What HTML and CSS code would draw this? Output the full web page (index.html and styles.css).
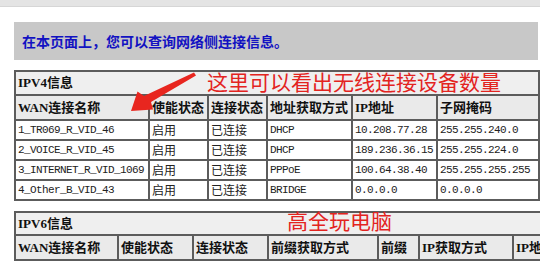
FILE: index.html
```html
<!DOCTYPE html>
<html lang="zh-CN">
<head>
<meta charset="utf-8">
<title>网络侧连接信息</title>
<link rel="stylesheet" href="styles.css">
</head>
<body>
<div class="topbar"></div>
<div class="content">
  <div class="banner">在本页面上，您可以查询网络侧连接信息。</div>

  <table class="grid t4">
    <colgroup>
      <col class="c4a"><col class="c4b"><col class="c4c"><col class="c4d"><col class="c4e"><col class="c4f">
    </colgroup>
    <tr class="title"><td colspan="6">IPV4信息</td></tr>
    <tr class="head">
      <td>WAN连接名称</td><td>使能状态</td><td>连接状态</td><td>地址获取方式</td><td>IP地址</td><td>子网掩码</td>
    </tr>
    <tr class="row">
      <td class="m">1_TR069_R_VID_46</td><td class="c">启用</td><td class="c">已连接</td><td class="m">DHCP</td><td class="m">10.208.77.28</td><td class="m">255.255.240.0</td>
    </tr>
    <tr class="row">
      <td class="m">2_VOICE_R_VID_45</td><td class="c">启用</td><td class="c">已连接</td><td class="m">DHCP</td><td class="m">189.236.36.15</td><td class="m">255.255.224.0</td>
    </tr>
    <tr class="row">
      <td class="m">3_INTERNET_R_VID_1069</td><td class="c">启用</td><td class="c">已连接</td><td class="m">PPPoE</td><td class="m">100.64.38.40</td><td class="m">255.255.255.255</td>
    </tr>
    <tr class="row">
      <td class="m">4_Other_B_VID_43</td><td class="c">启用</td><td class="c">已连接</td><td class="m">BRIDGE</td><td class="m">0.0.0.0</td><td class="m">0.0.0.0</td>
    </tr>
  </table>

  <table class="grid t6">
    <colgroup>
      <col class="c6a"><col class="c6b"><col class="c6c"><col class="c6d"><col class="c6e"><col class="c6f"><col class="c6g">
    </colgroup>
    <tr class="title t6title"><td colspan="7">IPV6信息</td></tr>
    <tr class="head">
      <td>WAN连接名称</td><td>使能状态</td><td>连接状态</td><td>前缀获取方式</td><td>前缀</td><td>IP获取方式</td><td>IP地址</td>
    </tr>
  </table>

  <div class="note note1">这里可以看出无线连接设备数量</div>
  <div class="note note2">高全玩电脑</div>
  <svg class="arrow" width="540" height="266" viewBox="0 0 540 266" aria-hidden="true">
    <polygon points="194,72.5 196,75.5 151,102 153,109.5 131,111 137.5,91.5 144,96" fill="#e8261f"/>
  </svg>
</div>
</body>
</html>
```

FILE: styles.css
```css
html, body {
  margin: 0;
  padding: 0;
  background: #ffffff;
  overflow: hidden;
  width: 540px;
  height: 266px;
}

.topbar {
  height: 6px;
  background: #e4e4e4;
  border-bottom: 1px solid #d6d6d6;
}

.content {
  padding: 15px 0 0 14px;
}

.banner {
  width: 516px;
  height: 38px;
  padding-left: 8px;
  background: #c8c8c8;
  color: #1212c2;
  font-family: "Noto Sans CJK SC", sans-serif;
  font-weight: 700;
  font-size: 14px;
  line-height: 38px;
}

.grid {
  border: 1px solid #5c5c5c;
  border-spacing: 0;
  border-collapse: separate;
  table-layout: fixed;
  color: #222222;
}

.grid td {
  border: 1px solid #5c5c5c;
  padding: 0 2px;
  white-space: nowrap;
  overflow: hidden;
}

.t4 {
  margin-top: 10px;
  width: 524px;
}

.t6 {
  margin-top: 10px;
  width: 640px;
}

.c4a { width: 134px; }
.c4b { width: 59px; }
.c4c { width: 59px; }
.c4d { width: 85px; }
.c4e { width: 85px; }
.c4f { width: 102px; }

.c6a { width: 103px; }
.c6b { width: 75px; }
.c6c { width: 75px; }
.c6d { width: 110px; }
.c6e { width: 41px; }
.c6f { width: 94px; }
.c6g { width: 142px; }

.title td {
  background: #efefef;
  height: 22px;
  line-height: 22px;
  font-family: "Liberation Serif", "Noto Sans CJK SC", serif;
  font-weight: 700;
  font-size: 13px;
  color: #111111;
}

.t6title td {
  height: 21px;
  line-height: 21px;
}

.head td {
  background: #eaeaea;
  height: 23px;
  line-height: 23px;
  font-family: "Liberation Serif", "Noto Sans CJK SC", serif;
  font-weight: 700;
  font-size: 13px;
  color: #111111;
}

.row td {
  height: 18px;
  line-height: 18px;
  background: #ffffff;
}

.row td.m {
  font-family: "Liberation Mono", monospace;
  font-size: 11px;
  letter-spacing: -0.6px;
}

.row td.c {
  font-family: "Noto Sans CJK SC", sans-serif;
  font-size: 12px;
}

.note {
  position: absolute;
  color: #e3241f;
  font-family: "Noto Sans CJK SC", sans-serif;
  font-size: 21px;
  line-height: 21px;
  white-space: nowrap;
}

.note1 {
  left: 207px;
  top: 71px;
}

.note2 {
  left: 287px;
  top: 210px;
}

.arrow {
  position: absolute;
  left: 0;
  top: 0;
  pointer-events: none;
}
```
